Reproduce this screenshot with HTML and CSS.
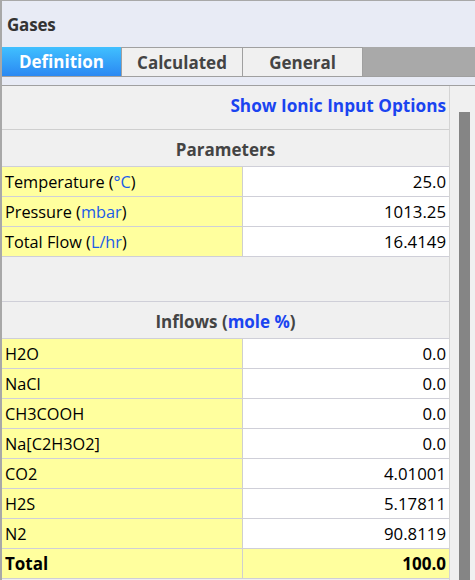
FILE: index.html
```html
<!DOCTYPE html>
<html>
<head>
<meta charset="utf-8">
<link rel="stylesheet" href="styles.css">
</head>
<body>
<div class="app">
  <div class="title">Gases</div>
  <div class="tabs">
    <div class="tab active">Definition</div>
    <div class="tab">Calculated</div>
    <div class="tab">General</div>
    <div class="tab-fill"></div>
  </div>
  <div class="strip"></div>
  <div class="content">
    <div class="panel">
      <div class="link-row"><span class="link">Show Ionic Input Options</span></div>
      <div class="table">
        <div class="row head"><span>Parameters</span></div>
        <div class="row"><div class="label">Temperature (<span class="unit">°C</span>)</div><div class="value">25.0</div></div>
        <div class="row"><div class="label">Pressure (<span class="unit">mbar</span>)</div><div class="value">1013.25</div></div>
        <div class="row"><div class="label">Total Flow (<span class="unit">L/hr</span>)</div><div class="value">16.4149</div></div>
        <div class="row spacer"></div>
        <div class="row head"><span>Inflows (<span class="unit-b">mole %</span>)</span></div>
        <div class="row"><div class="label">H2O</div><div class="value">0.0</div></div>
        <div class="row"><div class="label">NaCl</div><div class="value">0.0</div></div>
        <div class="row"><div class="label">CH3COOH</div><div class="value">0.0</div></div>
        <div class="row"><div class="label">Na[C2H3O2]</div><div class="value">0.0</div></div>
        <div class="row"><div class="label">CO2</div><div class="value">4.01001</div></div>
        <div class="row"><div class="label">H2S</div><div class="value">5.17811</div></div>
        <div class="row"><div class="label">N2</div><div class="value">90.8119</div></div>
        <div class="row total"><div class="label">Total</div><div class="value">100.0</div></div>
      </div>
    </div>
    <div class="scroll"><div class="thumb"></div></div>
  </div>
</div>
</body>
</html>
```
FILE: styles.css
```css
html, body {
  margin: 0;
  padding: 0;
  width: 475px;
  height: 580px;
  overflow: hidden;
  font-family: "Open Sans", "Noto Sans", sans-serif;
}
.app {
  width: 475px;
  height: 580px;
  box-sizing: border-box;
  border-top: 1px solid #a8a8a8;
  border-left: 2px solid #a8a8a8;
  background: #e8ebf5;
  display: flex;
  flex-direction: column;
  overflow: hidden;
}
.title {
  height: 46px;
  flex: none;
  display: flex;
  align-items: center;
  padding-left: 5px;
  font-weight: 700;
  font-size: 17px;
  color: #333;
  letter-spacing: -0.2px;
}
.tabs {
  height: 30px;
  flex: none;
  display: flex;
  box-sizing: border-box;
  border-bottom: 1px solid #a0a0a0;
}
.tab {
  width: 120px;
  box-sizing: border-box;
  display: flex;
  align-items: center;
  justify-content: center;
  font-weight: 700;
  font-size: 17px;
  color: #444;
  background: #f0f0f0;
  border-top: 1px solid #a0a0a0;
  border-right: 1px solid #a0a0a0;
}
.tab:nth-child(2) { width: 121px; }
.tab.active {
  background: linear-gradient(#40c0ff, #2b88f2);
  color: #fff;
  border-top: none;
}
.tab-fill {
  flex: 1;
  background: #a9a9a9;
}
.strip {
  height: 8px;
  flex: none;
  border-bottom: 1px solid #a0a0a0;
}
.content {
  flex: 1;
  display: flex;
  background: #f0f0f0;
  overflow: hidden;
}
.panel {
  width: 447px;
  flex: none;
  border-right: 1px solid #d4d4d4;
}
.link-row {
  height: 43px;
  display: flex;
  justify-content: flex-end;
  align-items: center;
  padding-right: 3px;
  box-sizing: border-box;
  padding-bottom: 5px;
}
.link {
  color: #1a44f0;
  font-weight: 700;
  font-size: 17.2px;
}
.table {
  border-top: 1px solid #cfcfcf;
}
.row {
  height: 29px;
  border-bottom: 1px solid #cfcfd8;
  display: flex;
  font-size: 16.3px;
}
.row.head {
  justify-content: center;
  align-items: center;
  font-weight: 700;
  font-size: 17px;
  color: #444;
  padding-top: 2px;
  box-sizing: border-box;
  height: 37px;
}
.row.spacer {
  height: 44px;
}
.label {
  width: 241px;
  box-sizing: border-box;
  background: #ffff9e;
  border-right: 1px solid #cfcfcf;
  padding-left: 3px;
  display: flex;
  align-items: center;
  color: #000;
}
.value {
  flex: 1;
  background: #fff;
  display: flex;
  align-items: center;
  justify-content: flex-end;
  padding-right: 3px;
  color: #000;
  font-size: 16.8px;
}
.unit { color: #1a5ce8; }
.unit-b { color: #1a44f0; }
.row.total .label,
.row.total .value {
  background: #ffff9e;
  font-weight: 700;
  font-size: 17px;
}
.scroll {
  flex: 1;
  background: #f0f0f0;
  padding-left: 9px;
  padding-top: 26px;
}
.thumb {
  width: 11px;
  height: 600px;
  background: #858585;
}
```
